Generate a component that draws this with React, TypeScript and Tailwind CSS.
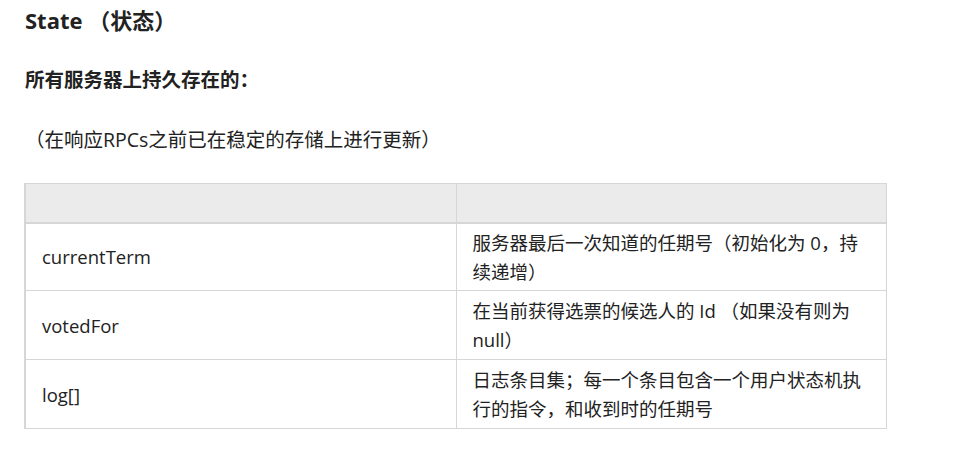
export default function App() {
  const rows = [
    { k: "currentTerm", v: "服务器最后一次知道的任期号（初始化为 0，持续递增）", h: "h-[68px]" },
    { k: "votedFor", v: "在当前获得选票的候选人的 Id （如果没有则为 null）", h: "h-[69px]" },
    { k: "log[]", v: "日志条目集；每一个条目包含一个用户状态机执行的指令，和收到时的任期号", h: "h-[69px]" },
  ];
  return (
    <div
      className="w-[956px] h-[454px] bg-white text-[#222] pl-[25px] pr-[69px]"
      style={{ fontFamily: '"Open Sans", "Noto Sans CJK SC", sans-serif' }}
    >
      <div className="pt-[4px] h-[37px] text-[22px] font-bold leading-[32px]">State （状态）</div>
      <div className="mt-[28px] text-[19.5px] font-bold leading-[30px]">所有服务器上持久存在的：</div>
      <div className="mt-[30px] text-[19.5px] leading-[30px]">（在响应RPCs之前已在稳定的存储上进行更新）</div>
      <table className="mt-[28px] -ml-[1px] w-[863px] border-collapse border-l-2 border-[#d6d6d6] text-[18.5px] table-fixed">
        <thead>
          <tr className="bg-[#ebebeb] h-[39px]">
            <th className="border border-[#d6d6d6] border-b-2 w-[431px]"></th>
            <th className="border border-[#d6d6d6] border-b-2"></th>
          </tr>
        </thead>
        <tbody>
          {rows.map((r) => (
            <tr key={r.k} className={r.h}>
              <td className="border border-[#d6d6d6] px-[16px] align-middle leading-[29px]">{r.k}</td>
              <td className="border border-[#d6d6d6] px-[16px] py-[4px] align-middle leading-[29px]">{r.v}</td>
            </tr>
          ))}
        </tbody>
      </table>
    </div>
  );
}
